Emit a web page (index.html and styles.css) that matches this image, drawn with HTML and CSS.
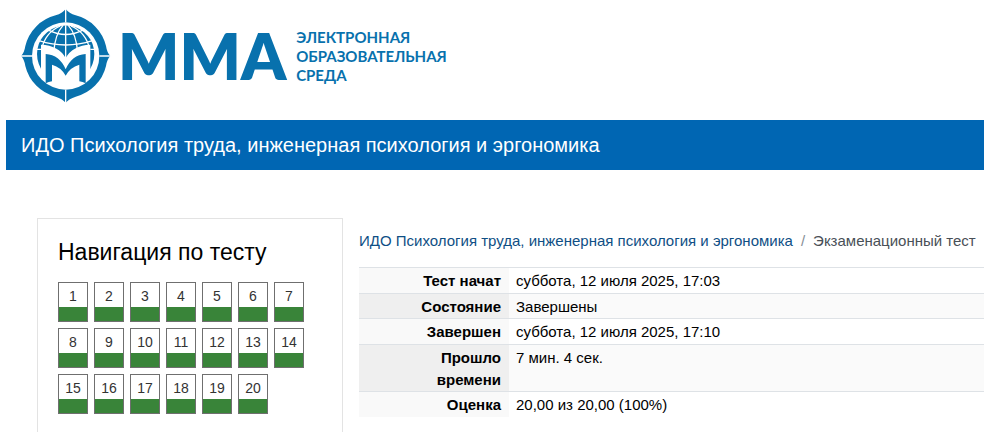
FILE: index.html
```html
<!DOCTYPE html>
<html lang="ru">
<head>
  <meta charset="UTF-8" />
  <meta name="viewport" content="width=device-width, initial-scale=1.0" />
  <title>Экзаменационный тест</title>
  <link rel="stylesheet" href="styles.css">
</head>
<body>
  <header class="site-header">
    <svg class="logo-mark" viewBox="32 26 270 288" aria-hidden="true">
      <path class="blue" d="M166 29Q176 42 196 48A125 125 0 0 1 287 140Q290 160 300 170Q290 180 287 200A125 125 0 0 1 196 292Q176 298 166 310Q156 298 136 292A125 125 0 0 1 45 200Q42 180 32 170Q42 160 45 140A125 125 0 0 1 136 48Q156 42 166 29Z"/>
      <circle class="white" cx="166" cy="170" r="101"/>
      <path class="blue" d="M92 208A86 86 0 1 1 240 208Z"/>
      <g class="grid-lines">
        <path d="M166 78V180M116 93Q166 118 216 93M86 124Q166 150 246 124M78 150H92M240 150H254"/>
        <path d="M158 78Q134 104 130 160M174 78Q198 104 202 160M150 80Q104 100 94 150M182 80Q228 100 238 150"/>
        <path d="M166 26V69M166 271V314M32 170H65M267 170H302"/>
      </g>
      <path class="white" d="M92 136Q145 138 166 176Q187 138 240 136V212H92Z"/>
      <path class="blue" d="M106 164Q148 167 166 210Q184 167 226 164V252Q217 247 207 246V196Q179 204 166 229Q153 204 125 196V246Q115 247 106 252Z"/>
    </svg>
    <span class="logo-name">ММА</span>
    <span class="logo-text">ЭЛЕКТРОННАЯ<br>ОБРАЗОВАТЕЛЬНАЯ<br>СРЕДА</span>
  </header>

  <h1 class="course-title">ИДО Психология труда, инженерная психология и эргономика</h1>

  <div class="page">
    <aside class="quiz-nav">
      <h2>Навигация по тесту</h2>
      <div class="questions">
        <a href="#q1">1</a>
        <a href="#q2">2</a>
        <a href="#q3">3</a>
        <a href="#q4">4</a>
        <a href="#q5">5</a>
        <a href="#q6">6</a>
        <a href="#q7">7</a>
        <a href="#q8">8</a>
        <a href="#q9">9</a>
        <a href="#q10">10</a>
        <a href="#q11">11</a>
        <a href="#q12">12</a>
        <a href="#q13">13</a>
        <a href="#q14">14</a>
        <a href="#q15">15</a>
        <a href="#q16">16</a>
        <a href="#q17">17</a>
        <a href="#q18">18</a>
        <a href="#q19">19</a>
        <a href="#q20">20</a>
      </div>
    </aside>

    <main class="content">
      <nav class="breadcrumb">
        <a href="#course">ИДО Психология труда, инженерная психология и эргономика</a>
        <span class="divider">/</span>
        <span>Экзаменационный тест</span>
      </nav>

      <table class="summary">
        <tbody>
          <tr><th scope="row">Тест начат</th><td>суббота, 12 июля 2025, 17:03</td></tr>
          <tr><th scope="row">Состояние</th><td>Завершены</td></tr>
          <tr><th scope="row">Завершен</th><td>суббота, 12 июля 2025, 17:10</td></tr>
          <tr><th scope="row">Прошло времени</th><td>7 мин. 4 сек.</td></tr>
          <tr><th scope="row">Оценка</th><td>20,00 из 20,00 (100%)</td></tr>
        </tbody>
      </table>
    </main>
  </div>
</body>
</html>
```
FILE: styles.css
```css
* { box-sizing: border-box; }

body {
  margin: 0 0 0 6px;
  font-family: "Liberation Sans", Arial, sans-serif;
  font-size: 15px;
  line-height: 22px;
  color: #000;
  background: #fff;
}

a { text-decoration: none; }

.site-header {
  display: flex;
  align-items: center;
  height: 120px;
  padding: 0 15px 8px;
  color: #0871ad;
}

.logo-mark {
  width: 90px;
  height: 96px;
}

.blue { fill: #0871ad; }
.white { fill: #fff; }

.grid-lines {
  fill: none;
  stroke: #fff;
  stroke-width: 4;
}

.logo-name {
  margin-left: 7px;
  font-family: Lato, "Open Sans", sans-serif;
  font-size: 64px;
  font-weight: 800;
  line-height: 72px;
}

.logo-text {
  margin-left: 10px;
  font-family: Lato, "Open Sans", sans-serif;
  font-size: 15px;
  font-weight: 700;
  line-height: 19px;
}

.course-title {
  margin: 0;
  padding: 14px 15px;
  background: #0066b3;
  color: #fff;
  font-size: 20px;
  font-weight: 400;
  line-height: 22px;
}

.page {
  display: grid;
  grid-template-columns: 306px 1fr;
  gap: 16px;
  padding: 48px 0 0 31px;
}

.quiz-nav {
  padding: 20px;
  border: 1px solid #e3e3e3;
}

.quiz-nav h2 {
  margin: 0 0 16px;
  font-size: 23px;
  font-weight: 400;
  line-height: 27px;
}

.questions {
  display: flex;
  flex-wrap: wrap;
  gap: 6px;
}

.questions a {
  width: 30px;
  height: 40px;
  border: 1px solid #6f6f6f;
  background: linear-gradient(#fff 24px, #398439 24px);
  color: #333;
  font-size: 14px;
  line-height: 27px;
  text-align: center;
}

.content { padding-top: 12px; }

.breadcrumb {
  display: flex;
  gap: 8px;
  margin-bottom: 15px;
  color: #495057;
}

.breadcrumb a { color: #0f4f85; }
.breadcrumb .divider { color: #868e96; }

.summary {
  width: 100%;
  border-spacing: 0;
}

.summary th,
.summary td {
  padding: 2px 7px 1px;
  border-top: 1px solid #dee2e6;
  vertical-align: top;
}

.summary th {
  width: 150px;
  padding-left: 24px;
  padding-right: 8px;
  background: #f9f9f9;
  text-align: right;
}

.summary tr:nth-child(even) th,
.summary tr:nth-child(even) td {
  padding-bottom: 0;
  background: #fafafa;
}

.summary tr:nth-child(even) th { background: #efefef; }
```
